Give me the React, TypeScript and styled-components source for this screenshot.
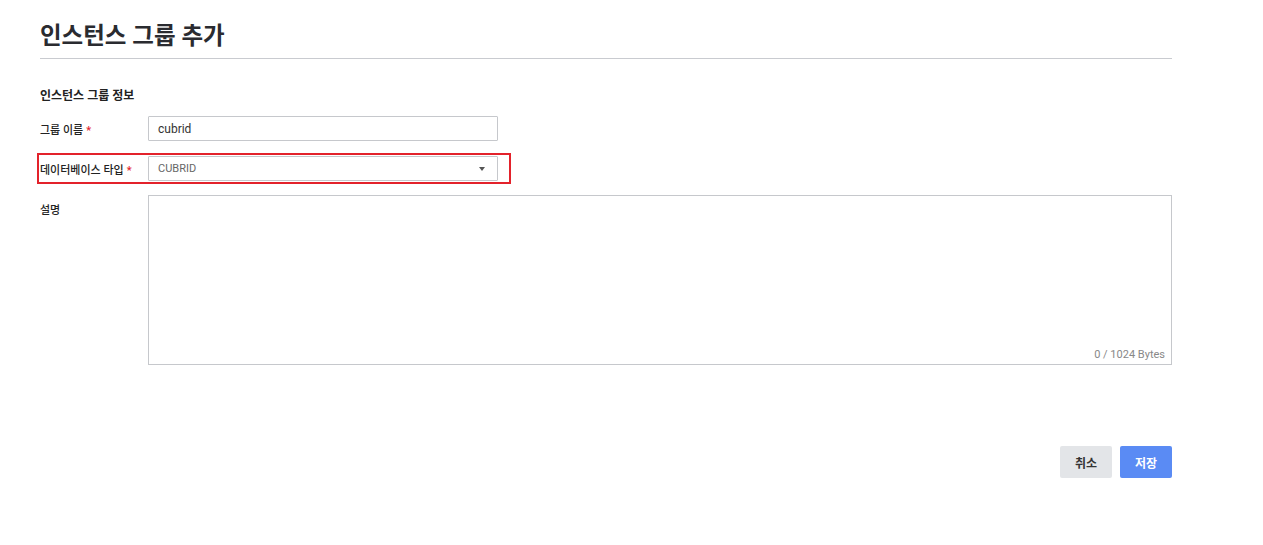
import styled, { createGlobalStyle } from 'styled-components';

const GlobalStyle = createGlobalStyle`
    html, body {
        margin: 0;
        padding: 0;
        background: #fff;
    }
    body {
        font-family: Roboto, "Noto Sans CJK KR", "Noto Sans", sans-serif;
        color: #333;
    }
    * {
        box-sizing: border-box;
    }
`;

const Page = styled.div`
    width: 1132px;
    margin-left: 40px;
    padding-top: 19px;
`;

const Title = styled.h1`
    margin: 0;
    font-size: 23.5px;
    font-weight: 700;
    color: #2a2b30;
    line-height: 34px;
    padding-bottom: 5px;
    border-bottom: 1px solid #c9cbd0;
`;

const Section = styled.div`
    padding-top: 28px;
`;

const SectionTitle = styled.h2`
    margin: 0 0 11px;
    font-size: 12px;
    font-weight: 700;
    color: #222;
    line-height: 18px;
`;

const Row = styled.div<{ $top?: boolean; $highlight?: boolean }>`
    display: flex;
    align-items: ${(p) => (p.$top ? 'flex-start' : 'center')};
    margin-bottom: ${(p) => (p.$highlight ? '14px' : '15px')};
    width: ${(p) => (p.$highlight ? '468px' : 'auto')};
    outline: ${(p) => (p.$highlight ? '2px solid #e3222b' : 'none')};
    outline-offset: 1px;
`;

const Label = styled.label<{ $top?: boolean }>`
    width: 108px;
    flex-shrink: 0;
    font-size: 11px;
    font-weight: 500;
    color: #222;
    padding-top: ${(p) => (p.$top ? '6px' : '0')};
`;

const Required = styled.span`
    color: #e3222b;
    margin-left: 3px;
`;

const Input = styled.div`
    width: 350px;
    height: 25px;
    border: 1px solid #c6c8cc;
    border-radius: 1px;
    padding: 0 9px;
    font-size: 12px;
    color: #333;
    display: flex;
    align-items: center;
`;

const Select = styled(Input)`
    color: #666;
    font-size: 11px;
    justify-content: space-between;
`;

const Caret = styled.span`
    width: 0;
    height: 0;
    border-left: 3px solid transparent;
    border-right: 3px solid transparent;
    border-top: 4px solid #555;
    margin-right: 3px;
`;

const TextArea = styled.div`
    flex: 1;
    height: 170px;
    border: 1px solid #c6c8cc;
    display: flex;
    align-items: flex-end;
    justify-content: flex-end;
    padding: 0 6px 3px 0;
`;

const Counter = styled.span`
    font-size: 11px;
    color: #888;
`;

const Footer = styled.div`
    display: flex;
    justify-content: flex-end;
    gap: 8px;
    margin-top: 81px;
`;

const Button = styled.button<{ $primary?: boolean }>`
    height: 32px;
    min-width: 52px;
    padding: 0 14px;
    border: none;
    border-radius: 2px;
    font-family: inherit;
    font-size: 12px;
    font-weight: 700;
    background: ${(p) => (p.$primary ? '#5a8bf4' : '#e3e5e8')};
    color: ${(p) => (p.$primary ? '#fff' : '#333')};
    cursor: pointer;
`;

const App = () => {
    return (
        <Page>
            <GlobalStyle />
            <Title>인스턴스 그룹 추가</Title>
            <Section>
                <SectionTitle>인스턴스 그룹 정보</SectionTitle>
                <Row>
                    <Label>
                        그룹 이름<Required>*</Required>
                    </Label>
                    <Input>cubrid</Input>
                </Row>
                <Row $highlight>
                    <Label>
                        데이터베이스 타입<Required>*</Required>
                    </Label>
                    <Select>
                        CUBRID
                        <Caret />
                    </Select>
                </Row>
                <Row $top>
                    <Label $top>설명</Label>
                    <TextArea>
                        <Counter>0 / 1024 Bytes</Counter>
                    </TextArea>
                </Row>
            </Section>
            <Footer>
                <Button>취소</Button>
                <Button $primary>저장</Button>
            </Footer>
        </Page>
    );
};

export default App;
